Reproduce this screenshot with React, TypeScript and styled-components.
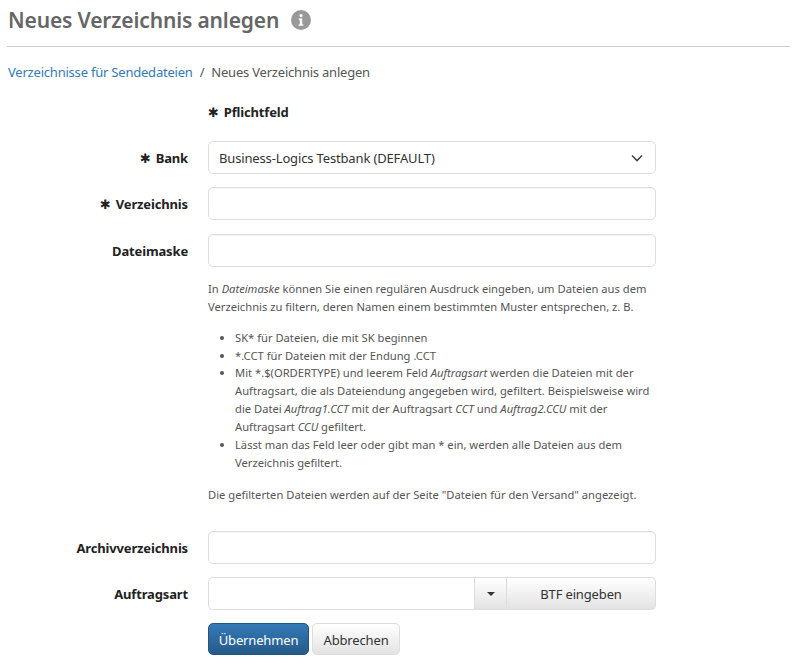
import React from "react";
import styled, { createGlobalStyle } from "styled-components";

const Global = createGlobalStyle`
  html, body { margin: 0; padding: 0; background: #fff; }
  body { font-family: "Noto Sans", "Open Sans", sans-serif; color: #333; font-size: 13px; letter-spacing: -0.15px; }
  * { box-sizing: border-box; }
`;

const Page = styled.div`
  width: 797px;
  height: 669px;
  padding: 0 7px;
  overflow: hidden;
`;
const Header = styled.header`
  height: 47px;
  border-bottom: 1px solid #ccc;
  display: flex;
  align-items: center;
  gap: 12px;
  padding-bottom: 7px;
`;
const Title = styled.h1`
  margin: 0;
  padding-left: 1px;
  font-size: 21px;
  line-height: 30px;
  font-weight: 600;
  letter-spacing: -0.15px;
  color: #666;
`;
const InfoIcon = styled.svg`
  width: 20px;
  height: 20px;
  display: block;
`;
const Breadcrumb = styled.nav`
  margin-top: 15px;
  padding-left: 1px;
  height: 20px;
  line-height: 20px;
  letter-spacing: -0.21px;
  color: #555;
  display: flex;
  gap: 7px;
`;
const Crumb = styled.a`
  color: #337ab7;
  text-decoration: none;
`;
const Form = styled.form`
  margin-top: 20px;
  display: flex;
  flex-direction: column;
`;
const Row = styled.div<{ $mb?: number }>`
  display: grid;
  grid-template-columns: 181px 448px;
  column-gap: 20px;
  align-items: center;
  margin-bottom: ${(p) => p.$mb ?? 13}px;
`;
const Label = styled.label`
  text-align: right;
  font-weight: 700;
  color: #222;
`;
const Star = styled.span`
  font-size: 13px;
  font-weight: 700;
  margin-right: 5px;
  font-family: "DejaVu Sans", sans-serif;
`;
const Required = styled.div`
  grid-column: 2;
  font-weight: 700;
  color: #222;
  line-height: 20px;
`;
const Input = styled.input`
  display: block;
  width: 100%;
  height: 33px;
  border: 1px solid #ddd;
  border-radius: 5px;
  background: #fff;
  box-shadow: inset 0 1px 1px rgba(0, 0, 0, 0.04);
  outline: none;
`;
const SelectBox = styled.div`
  position: relative;
  height: 33px;
  border: 1px solid #ddd;
  border-radius: 5px;
  padding: 0 10px;
  display: flex;
  align-items: center;
  justify-content: space-between;
  color: #333;
`;
const Chevron = styled.svg`
  width: 12px;
  height: 8px;
  margin-right: 2px;
`;
const Help = styled.div`
  grid-column: 2;
  font-size: 11.2px;
  letter-spacing: 0;
  line-height: 17.85px;
  color: #555;
  padding-top: 1px;
`;
const HelpPara = styled.p`
  margin: 0;
`;
const HelpList = styled.ul`
  margin: 13px 0 15px;
  padding-left: 27px;
`;
const Group = styled.div`
  display: flex;
  height: 33px;
`;
const GroupInput = styled.input`
  flex: 1;
  min-width: 0;
  height: 33px;
  border: 1px solid #ddd;
  border-right: 0;
  border-radius: 5px 0 0 5px;
  outline: none;
`;
const GroupButton = styled.button<{ $w: number; $last?: boolean }>`
  width: ${(p) => p.$w}px;
  height: 33px;
  border: 1px solid #ddd;
  border-left: ${(p) => (p.$last ? "0" : "1px solid #ddd")};
  border-radius: ${(p) => (p.$last ? "0 5px 5px 0" : "0")};
  background: linear-gradient(#fff, #e3e3e3);
  font: inherit;
  letter-spacing: inherit;
  color: #333;
  padding: 0;
  display: flex;
  align-items: center;
  justify-content: center;
`;
const Caret = styled.span`
  width: 0;
  height: 0;
  border-left: 4px solid transparent;
  border-right: 4px solid transparent;
  border-top: 4px solid #333;
`;
const Actions = styled.div`
  grid-column: 2;
  display: flex;
  gap: 3px;
`;
const Primary = styled.button`
  width: 101px;
  height: 32px;
  border: 1px solid #245580;
  border-radius: 5px;
  background: linear-gradient(#337ab7, #265a88);
  color: #fff;
  font: inherit;
  letter-spacing: inherit;
  padding: 2px 0 0;
`;
const Secondary = styled.button`
  width: 88px;
  height: 32px;
  border: 1px solid #ddd;
  border-radius: 5px;
  background: linear-gradient(#fff, #e3e3e3);
  color: #333;
  font: inherit;
  letter-spacing: inherit;
  padding: 2px 0 0;
`;

export default function App() {
  return (
    <Page>
      <Global />
      <Header>
        <Title>Neues Verzeichnis anlegen</Title>
        <InfoIcon viewBox="0 0 20 20">
          <circle cx="10" cy="10" r="10" fill="#999" />
          <circle cx="10" cy="5.6" r="1.6" fill="#fff" />
          <path d="M7.6 8.4h3.6v6h1.2v1.4H7.6v-1.4h1.2V9.8H7.6z" fill="#fff" />
        </InfoIcon>
      </Header>
      <Breadcrumb>
        <Crumb href="#">Verzeichnisse für Sendedateien</Crumb>
        <span>/</span>
        <span>Neues Verzeichnis anlegen</span>
      </Breadcrumb>
      <Form>
        <Row $mb={18}>
          <Required>
            <Star>✱</Star>Pflichtfeld
          </Required>
        </Row>
        <Row>
          <Label>
            <Star>✱</Star>Bank
          </Label>
          <SelectBox>
            <span>Business-Logics Testbank (DEFAULT)</span>
            <Chevron viewBox="0 0 12 8">
              <path d="M1 1.5l5 5 5-5" fill="none" stroke="#444" strokeWidth="1.6" />
            </Chevron>
          </SelectBox>
        </Row>
        <Row $mb={14}>
          <Label>
            <Star>✱</Star>Verzeichnis
          </Label>
          <Input />
        </Row>
        <Row $mb={12}>
          <Label>Dateimaske</Label>
          <Input />
        </Row>
        <Row $mb={27}>
          <Help>
            <HelpPara>
              In <i>Dateimaske</i> können Sie einen regulären Ausdruck eingeben, um Dateien aus dem
              <br />
              Verzeichnis zu filtern, deren Namen einem bestimmten Muster entsprechen, z. B.
            </HelpPara>
            <HelpList>
              <li>SK* für Dateien, die mit SK beginnen</li>
              <li>*.CCT für Dateien mit der Endung .CCT</li>
              <li>
                Mit *.$(ORDERTYPE) und leerem Feld <i>Auftragsart</i> werden die Dateien mit der
                <br />
                Auftragsart, die als Dateiendung angegeben wird, gefiltert. Beispielsweise wird
                <br />
                die Datei <i>Auftrag1.CCT</i> mit der Auftragsart <i>CCT</i> und <i>Auftrag2.CCU</i> mit der
                <br />
                Auftragsart <i>CCU</i> gefiltert.
              </li>
              <li>
                Lässt man das Feld leer oder gibt man * ein, werden alle Dateien aus dem
                <br />
                Verzeichnis gefiltert.
              </li>
            </HelpList>
            <HelpPara>Die gefilterten Dateien werden auf der Seite "Dateien für den Versand" angezeigt.</HelpPara>
          </Help>
        </Row>
        <Row $mb={13}>
          <Label>Archivverzeichnis</Label>
          <Input />
        </Row>
        <Row $mb={13}>
          <Label>Auftragsart</Label>
          <Group>
            <GroupInput />
            <GroupButton $w={33}>
              <Caret />
            </GroupButton>
            <GroupButton $w={149} $last>
              BTF eingeben
            </GroupButton>
          </Group>
        </Row>
        <Row>
          <Actions>
            <Primary type="button">Übernehmen</Primary>
            <Secondary type="button">Abbrechen</Secondary>
          </Actions>
        </Row>
      </Form>
    </Page>
  );
}
